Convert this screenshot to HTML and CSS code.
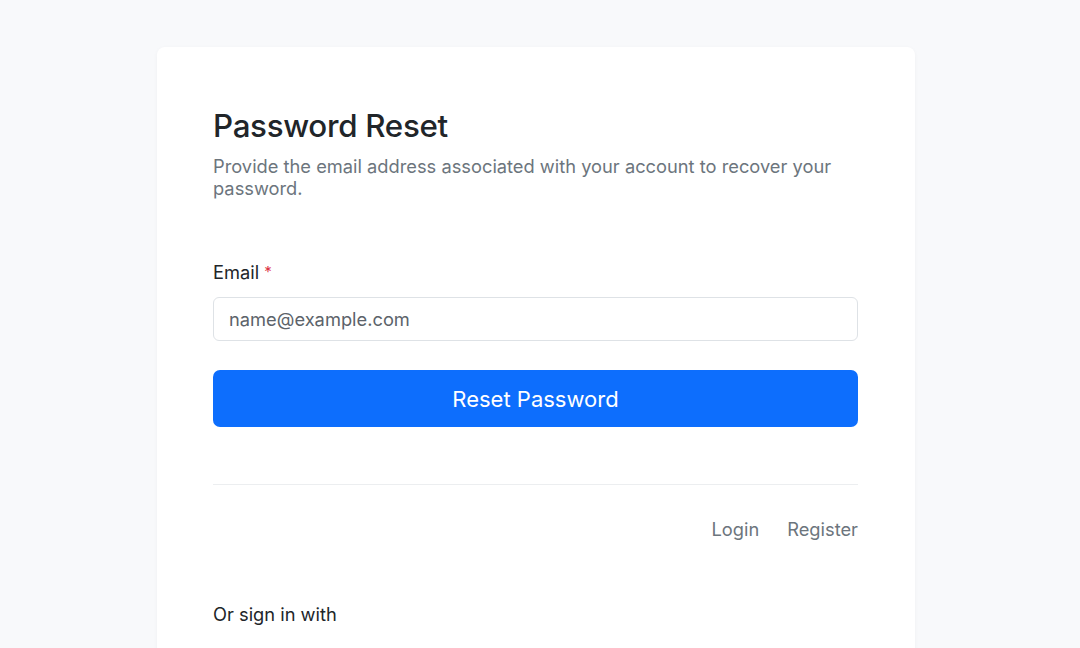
FILE: index.html
```html
<!DOCTYPE html>
<html>
<head>
<meta charset="utf-8">
<link rel="stylesheet" href="styles.css">
</head>
<body>
<main class="page">
  <section class="card">
    <h1 class="title">Password Reset</h1>
    <p class="subtitle">Provide the email address associated with your account to recover your password.</p>
    <form class="form">
      <label class="label" for="email">Email <span class="req">*</span></label>
      <input class="input" id="email" type="email" placeholder="name@example.com">
      <button class="btn" type="button">Reset Password</button>
    </form>
    <hr class="divider">
    <nav class="links">
      <a class="link" href="#">Login</a>
      <a class="link" href="#">Register</a>
    </nav>
    <p class="alt">Or sign in with</p>
  </section>
</main>
</body>
</html>
```

FILE: styles.css
```css
* { box-sizing: border-box; }
html, body { margin: 0; padding: 0; }
body {
  background: #f8f9fb;
  font-family: Inter, "Liberation Sans", sans-serif;
  color: #212529;
  height: 648px;
  overflow: hidden;
}
.page {
  display: flex;
  justify-content: center;
  padding-top: 47px;
}
.card {
  width: 758px;
  margin-right: 8px;
  background: #fff;
  border-radius: 8px;
  box-shadow: 0 1px 4px rgba(0,0,0,0.04);
  padding: 51px 57px 0 56px;
  height: 620px;
}
.title {
  margin: 0;
  font-size: 31.3px;
  font-weight: 500;
  line-height: 56px;
  letter-spacing: -0.3px;
  color: #212529;
}
.subtitle {
  margin: 1px 0 0;
  font-size: 18.3px;
  line-height: 22px;
  color: #6c757d;
}
.form {
  display: flex;
  flex-direction: column;
  margin-top: 62px;
}
.label {
  font-size: 18.3px;
  line-height: 22px;
  margin-bottom: 14px;
}
.req {
  color: #dc3545;
  font-size: 15px;
  vertical-align: 2px;
}
.input {
  height: 44px;
  border: 1px solid #dee2e6;
  border-radius: 6px;
  padding: 0 15px;
  font-family: inherit;
  font-size: 18.3px;
  color: #212529;
  outline: none;
}
.input::placeholder { color: #5c636a; }
.btn {
  margin-top: 29px;
  height: 57px;
  border: none;
  border-radius: 7px;
  background: #0d6efd;
  color: #fff;
  font-family: inherit;
  font-size: 22px;
}
.divider {
  margin: 57px 0 0;
  border: 0;
  border-top: 1px solid #eceef0;
}
.links {
  display: flex;
  justify-content: flex-end;
  gap: 28px;
  margin-top: 33px;
}
.link {
  font-size: 18.3px;
  line-height: 22px;
  color: #6c757d;
  text-decoration: none;
}
.alt {
  margin: 63px 0 0;
  font-size: 18.3px;
  line-height: 22px;
  color: #212529;
}
```
